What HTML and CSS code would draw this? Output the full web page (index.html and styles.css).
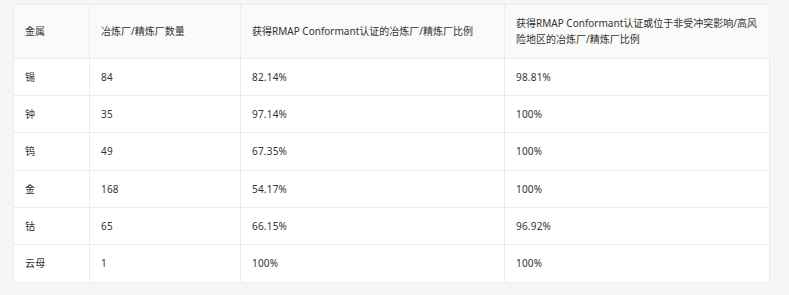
FILE: index.html
```html
<!DOCTYPE html>
<html lang="zh-CN">
<head>
<meta charset="utf-8">
<link rel="stylesheet" href="styles.css">
</head>
<body>
<div class="page">
  <table class="data">
    <colgroup>
      <col class="c1"><col class="c2"><col class="c3"><col class="c4">
    </colgroup>
    <thead>
      <tr>
        <th>金属</th>
        <th>冶炼厂/精炼厂数量</th>
        <th>获得RMAP Conformant认证的冶炼厂/精炼厂比例</th>
        <th>获得RMAP Conformant认证或位于非受冲突影响/高风险地区的冶炼厂/精炼厂比例</th>
      </tr>
    </thead>
    <tbody>
      <tr><td>锡</td><td>84</td><td>82.14%</td><td>98.81%</td></tr>
      <tr><td>钟</td><td>35</td><td>97.14%</td><td>100%</td></tr>
      <tr><td>钨</td><td>49</td><td>67.35%</td><td>100%</td></tr>
      <tr><td>金</td><td>168</td><td>54.17%</td><td>100%</td></tr>
      <tr><td>钴</td><td>65</td><td>66.15%</td><td>96.92%</td></tr>
      <tr><td>云母</td><td>1</td><td>100%</td><td>100%</td></tr>
    </tbody>
  </table>
</div>
</body>
</html>
```
FILE: styles.css
```css
html, body {
  margin: 0;
  padding: 0;
  background: #f5f6f8;
}
.page {
  padding: 4px 20px 0 13px;
  font-family: "Noto Sans", "Noto Sans CJK SC", sans-serif;
  font-size: 10px;
  color: #333;
}
.data {
  width: 756px;
  table-layout: fixed;
  border-collapse: collapse;
  background: #fff;
  border: 1px solid #ececec;
}
.c1 { width: 76px; }
.c2 { width: 151px; }
.c3 { width: 264px; }
.c4 { width: 265px; }
.data th,
.data td {
  border: 1px solid #ececec;
  padding: 10px 10px 10px 11px;
  line-height: 16.33px;
  text-align: left;
  vertical-align: middle;
  font-weight: normal;
}
.data td {
  letter-spacing: 0.2px;
}
.data thead th {
  background: #fafafa;
}
```
